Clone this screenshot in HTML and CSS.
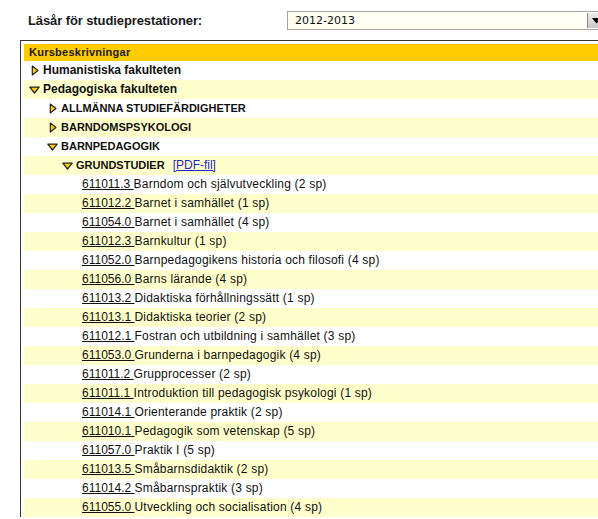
FILE: index.html
```html
<!DOCTYPE html>
<html lang="sv">
<head>
<meta charset="utf-8">
<title>Kursbeskrivningar</title>
<link rel="stylesheet" href="styles.css">
</head>
<body>
<div class="top">
  <div class="label">Läsår för studieprestationer:</div>
  <div class="select">
    <span class="select-value">2012-2013</span>
    <span class="select-btn"><svg width="9" height="6" viewBox="0 0 9 6"><path d="M0 0 H9 L4.5 5.5 Z" fill="#000"/></svg></span>
  </div>
</div>
<div class="panel">
  <div class="head">Kursbeskrivningar</div>
  <div class="row l0"><span class="ic"><svg width="8" height="11" viewBox="0 0 8 11"><path d="M1.3 1 L7 5.5 L1.3 10 Z" fill="#ffcc00" stroke="#222" stroke-width="1.2" stroke-linejoin="round"/></svg></span><b>Humanistiska fakulteten</b></div>
  <div class="row l0 alt"><span class="ic"><svg width="11" height="8" viewBox="0 0 11 8"><path d="M0.8 1.2 L10.2 1.2 L5.5 7 Z" fill="#ffcc00" stroke="#222" stroke-width="1.2" stroke-linejoin="round"/></svg></span><b>Pedagogiska fakulteten</b></div>
  <div class="row l1"><span class="ic"><svg width="8" height="11" viewBox="0 0 8 11"><path d="M1.3 1 L7 5.5 L1.3 10 Z" fill="#ffcc00" stroke="#222" stroke-width="1.2" stroke-linejoin="round"/></svg></span><b class="up">ALLMÄNNA STUDIEFÄRDIGHETER</b></div>
  <div class="row l1 alt"><span class="ic"><svg width="8" height="11" viewBox="0 0 8 11"><path d="M1.3 1 L7 5.5 L1.3 10 Z" fill="#ffcc00" stroke="#222" stroke-width="1.2" stroke-linejoin="round"/></svg></span><b class="up">BARNDOMSPSYKOLOGI</b></div>
  <div class="row l1"><span class="ic"><svg width="11" height="8" viewBox="0 0 11 8"><path d="M0.8 1.2 L10.2 1.2 L5.5 7 Z" fill="#ffcc00" stroke="#222" stroke-width="1.2" stroke-linejoin="round"/></svg></span><b class="up">BARNPEDAGOGIK</b></div>
  <div class="row l2 alt"><span class="ic"><svg width="11" height="8" viewBox="0 0 11 8"><path d="M0.8 1.2 L10.2 1.2 L5.5 7 Z" fill="#ffcc00" stroke="#222" stroke-width="1.2" stroke-linejoin="round"/></svg></span><b class="up">GRUNDSTUDIER</b><a class="pdf" href="#">[PDF-fil]</a></div>
  <div class="row c"><a class="code" href="#">611011.3 </a><span class="nm">Barndom och självutveckling (2 sp)</span></div>
  <div class="row c alt"><a class="code" href="#">611012.2 </a><span class="nm">Barnet i samhället (1 sp)</span></div>
  <div class="row c"><a class="code" href="#">611054.0 </a><span class="nm">Barnet i samhället (4 sp)</span></div>
  <div class="row c alt"><a class="code" href="#">611012.3 </a><span class="nm">Barnkultur (1 sp)</span></div>
  <div class="row c"><a class="code" href="#">611052.0 </a><span class="nm">Barnpedagogikens historia och filosofi (4 sp)</span></div>
  <div class="row c alt"><a class="code" href="#">611056.0 </a><span class="nm">Barns lärande (4 sp)</span></div>
  <div class="row c"><a class="code" href="#">611013.2 </a><span class="nm">Didaktiska förhållningssätt (1 sp)</span></div>
  <div class="row c alt"><a class="code" href="#">611013.1 </a><span class="nm">Didaktiska teorier (2 sp)</span></div>
  <div class="row c"><a class="code" href="#">611012.1 </a><span class="nm">Fostran och utbildning i samhället (3 sp)</span></div>
  <div class="row c alt"><a class="code" href="#">611053.0 </a><span class="nm">Grunderna i barnpedagogik (4 sp)</span></div>
  <div class="row c"><a class="code" href="#">611011.2 </a><span class="nm">Grupprocesser (2 sp)</span></div>
  <div class="row c alt"><a class="code" href="#">611011.1 </a><span class="nm">Introduktion till pedagogisk psykologi (1 sp)</span></div>
  <div class="row c"><a class="code" href="#">611014.1 </a><span class="nm">Orienterande praktik (2 sp)</span></div>
  <div class="row c alt"><a class="code" href="#">611010.1 </a><span class="nm">Pedagogik som vetenskap (5 sp)</span></div>
  <div class="row c"><a class="code" href="#">611057.0 </a><span class="nm">Praktik I (5 sp)</span></div>
  <div class="row c alt"><a class="code" href="#">611013.5 </a><span class="nm">Småbarnsdidaktik (2 sp)</span></div>
  <div class="row c"><a class="code" href="#">611014.2 </a><span class="nm">Småbarnspraktik (3 sp)</span></div>
  <div class="row c alt"><a class="code" href="#">611055.0 </a><span class="nm">Utveckling och socialisation (4 sp)</span></div>
</div>
</body>
</html>
```
FILE: styles.css
```css
html, body {
  margin: 0;
  padding: 0;
  overflow: hidden;
  background: #fff;
}
body {
  font-family: "Liberation Sans", Arial, sans-serif;
  color: #111;
  width: 598px;
  height: 519px;
}
.top {
  display: flex;
  align-items: center;
  padding: 11px 0 0 28px;
}
.label {
  flex: none;
  width: 259px;
  font-weight: bold;
  font-size: 13px;
  letter-spacing: -0.1px;
  color: #1a1a1a;
}
.select {
  display: flex;
  flex: none;
  width: 330px;
  height: 17px;
  border: 1px solid #a3a3a3;
  background: #fffff2;
}
.select-value {
  flex: none;
  width: 292px;
  padding-left: 7px;
  font-family: "DejaVu Sans", Verdana, sans-serif;
  font-size: 11px;
  line-height: 17px;
  color: #111;
}
.select-btn {
  flex: none;
  width: 17px;
  height: 15px;
  margin-top: 1px;
  border-left: 1px solid #8a8a8a;
  background: linear-gradient(#ececec, #c9c9c9);
  display: flex;
  align-items: center;
  justify-content: center;
}
.panel {
  margin: 10px 0 0 20px;
  width: 640px;
  border-top: 1px solid #333;
  border-left: 1px solid #333;
  padding: 3px 0 0 3px;
}
.head {
  height: 17px;
  line-height: 17px;
  background: #ffcc00;
  padding-left: 5px;
  font-size: 11px;
  font-weight: bold;
  letter-spacing: 0.25px;
  color: #1a1a1a;
}
.row {
  display: flex;
  align-items: center;
  height: 19px;
  line-height: 19px;
  font-size: 12px;
  white-space: nowrap;
}
.row.alt {
  background: #ffffcc;
}
.ic {
  flex: none;
  width: 11px;
  height: 11px;
  margin-right: 3px;
  display: flex;
  align-items: center;
  justify-content: center;
}
.l0 { padding-left: 5px; }
.l1 { padding-left: 23px; }
.l2 { padding-left: 38px; }
.c { padding-left: 58px; }
b { font-weight: bold; color: #111; }
b.up { font-size: 11px; }
.pdf {
  margin-left: 8px;
  color: #2424cc;
  text-decoration: underline;
}
.code {
  color: #111;
  text-decoration: underline;
  white-space: pre;
}
.nm {
  letter-spacing: 0.2px;
}
```
